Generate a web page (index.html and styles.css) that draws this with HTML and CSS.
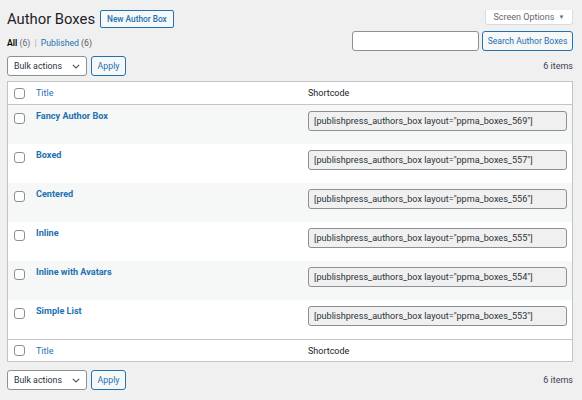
FILE: index.html
```html
<!DOCTYPE html>
<html>
<head>
<meta charset="utf-8">
<link rel="stylesheet" href="styles.css">
</head>
<body>
<div class="wrap">
  <div class="screen-options">Screen Options <span class="tri">▼</span></div>
  <div class="title-row">
    <h1 class="page-title">Author Boxes</h1>
    <a class="btn-outline">New Author Box</a>
  </div>
  <div class="filters-row">
    <div class="subsubsub"><b class="current">All</b> <span class="count">(6)</span> <span class="sep">|</span> <a class="link">Published <span class="count">(6)</span></a></div>
    <div class="search-box">
      <span class="search-input"></span>
      <span class="btn-secondary">Search Author Boxes</span>
    </div>
  </div>
  <div class="tablenav">
    <div class="actions">
      <span class="select">Bulk actions<svg class="chev" width="8" height="5" viewBox="0 0 8 5"><path d="M0.8 0.8 L4 4 L7.2 0.8" fill="none" stroke="#50575e" stroke-width="1.2"/></svg></span>
      <span class="btn-apply">Apply</span>
    </div>
    <div class="num">6 items</div>
  </div>
  <div class="table">
    <div class="row head">
      <div class="cb"><span class="check"></span></div>
      <div class="col-title"><a class="link">Title</a></div>
      <div class="col-code">Shortcode</div>
    </div>
    <div class="row item alt">
      <div class="cb"><span class="check"></span></div>
      <div class="col-title"><a class="row-title">Fancy Author Box</a></div>
      <div class="col-code"><span class="code">[publishpress_authors_box layout="ppma_boxes_569"]</span></div>
    </div>
    <div class="row item">
      <div class="cb"><span class="check"></span></div>
      <div class="col-title"><a class="row-title">Boxed</a></div>
      <div class="col-code"><span class="code">[publishpress_authors_box layout="ppma_boxes_557"]</span></div>
    </div>
    <div class="row item alt">
      <div class="cb"><span class="check"></span></div>
      <div class="col-title"><a class="row-title">Centered</a></div>
      <div class="col-code"><span class="code">[publishpress_authors_box layout="ppma_boxes_556"]</span></div>
    </div>
    <div class="row item">
      <div class="cb"><span class="check"></span></div>
      <div class="col-title"><a class="row-title">Inline</a></div>
      <div class="col-code"><span class="code">[publishpress_authors_box layout="ppma_boxes_555"]</span></div>
    </div>
    <div class="row item alt">
      <div class="cb"><span class="check"></span></div>
      <div class="col-title"><a class="row-title">Inline with Avatars</a></div>
      <div class="col-code"><span class="code">[publishpress_authors_box layout="ppma_boxes_554"]</span></div>
    </div>
    <div class="row item">
      <div class="cb"><span class="check"></span></div>
      <div class="col-title"><a class="row-title">Simple List</a></div>
      <div class="col-code"><span class="code">[publishpress_authors_box layout="ppma_boxes_553"]</span></div>
    </div>
    <div class="row head foot">
      <div class="cb"><span class="check"></span></div>
      <div class="col-title"><a class="link">Title</a></div>
      <div class="col-code">Shortcode</div>
    </div>
  </div>
  <div class="tablenav bottom">
    <div class="actions">
      <span class="select">Bulk actions<svg class="chev" width="8" height="5" viewBox="0 0 8 5"><path d="M0.8 0.8 L4 4 L7.2 0.8" fill="none" stroke="#50575e" stroke-width="1.2"/></svg></span>
      <span class="btn-apply">Apply</span>
    </div>
    <div class="num">6 items</div>
  </div>
</div>
</body>
</html>
```

FILE: styles.css
```css
* { box-sizing: border-box; }
html, body {
  margin: 0;
  padding: 0;
  background: #f0f0f1;
  font-family: Roboto, "Liberation Sans", sans-serif;
  font-size: 9px;
  color: #3c434a;
}
.wrap {
  padding: 0 9px 0 7px;
}
.screen-options {
  float: right;
  width: 88px;
  height: 15px;
  background: #fff;
  border: 1px solid #dcdcde;
  border-top: none;
  border-radius: 0 0 3px 3px;
  color: #646970;
  font-size: 9px;
  line-height: 13px;
  text-align: center;
}
.screen-options .tri {
  font-size: 6px;
  vertical-align: 1px;
  margin-left: 2px;
}
.title-row {
  display: flex;
  align-items: center;
  gap: 5px;
  height: 18px;
  margin-top: 10px;
}
.page-title {
  margin: 0;
  font-size: 14.8px;
  font-weight: 400;
  color: #1d2327;
  line-height: 18px;
}
.btn-outline {
  height: 18px;
  padding: 0 6px;
  border: 1px solid #2271b1;
  border-radius: 2px;
  color: #2271b1;
  background: #f6f7f7;
  font-weight: 500;
  font-size: 8.3px;
  line-height: 16px;
}
.filters-row {
  display: flex;
  justify-content: space-between;
  margin-top: 3px;
  height: 20px;
}
.subsubsub {
  padding-top: 7px;
  color: #646970;
  font-size: 8.7px;
}
.subsubsub .current { color: #000; font-weight: 600; }
.subsubsub .sep { color: #a7aaad; margin: 0 2px; }
.link { color: #2271b1; }
.subsubsub .link .count { color: #50575e; }
.search-box {
  display: flex;
  gap: 3px;
}
.search-input {
  width: 127px;
  height: 20px;
  background: #fff;
  border: 1px solid #8c8f94;
  border-radius: 3px;
}
.btn-secondary, .btn-apply {
  height: 20px;
  padding: 0 6px;
  border: 1px solid #2271b1;
  border-radius: 3px;
  background: #f6f7f7;
  color: #2271b1;
  line-height: 18px;
  font-size: 8.6px;
}
.btn-secondary { width: 91px; text-align: center; padding: 0; }
.tablenav {
  display: flex;
  justify-content: space-between;
  align-items: center;
  margin-top: 5px;
  height: 20px;
}
.tablenav.bottom { margin-top: 8px; }
.actions { display: flex; gap: 4px; }
.select {
  display: flex;
  align-items: center;
  justify-content: space-between;
  width: 80px;
  height: 20px;
  padding: 0 6px 0 6px;
  background: #fff;
  border: 1px solid #8c8f94;
  border-radius: 3px;
  color: #2c3338;
  font-size: 8.8px;
}
.chev { margin-top: 1px; }
.btn-apply { width: 35px; text-align: center; padding: 0; font-size: 8.8px; }
.num { color: #3c434a; font-size: 9px; }
.table {
  margin-top: 5px;
  background: #fff;
  border: 1px solid #c3c4c7;
}
.row {
  display: flex;
}
.row.head {
  height: 23px;
  border-bottom: 1px solid #c3c4c7;
  align-items: center;
}
.row.foot {
  height: 22px;
  border-bottom: none;
  border-top: 1px solid #c3c4c7;
}
.row.item { height: 39px; padding-top: 6px; }
.row.alt { background: #f6f7f7; }
.cb { width: 28px; padding-left: 6px; }
.check {
  display: block;
  width: 11px;
  height: 11px;
  border: 1px solid #8c8f94;
  border-radius: 3px;
  background: #fff;
}
.row.item .check { margin-top: 2px; }
.col-title { width: 272px; }
.row-title {
  color: #2271b1;
  font-weight: 700;
  font-size: 9.1px;
}
.col-code { flex: 1; color: #1d2327; }
.row.item .col-code { padding: 0 5px 0 0; }
.code {
  display: block;
  height: 20px;
  padding-left: 5px;
  background: #f0f0f1;
  border: 1px solid #8c8f94;
  border-radius: 3px;
  color: #2c3338;
  line-height: 18px;
  font-size: 9.1px;
}
```
